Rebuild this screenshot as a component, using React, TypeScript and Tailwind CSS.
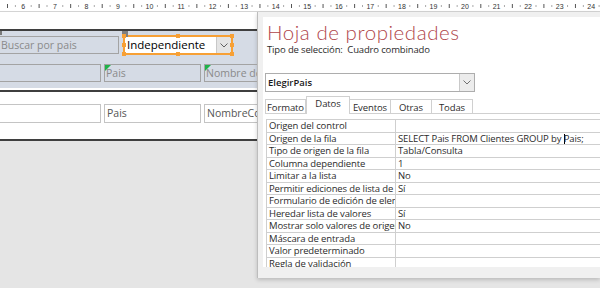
import React from "react";

const nums = Array.from({ length: 19 }, (_, i) => i + 6);

function Ruler() {
  const step = 31.55;
  const x0 = 23.3;
  return (
    <div className="h-[12px] bg-white border-b border-[#d4d4d4]">
      <svg width="600" height="11" className="block">
        <rect x={x0 - 15.8 - 0.5} y={4} width={1} height={4} fill="#555" />
        <rect x={x0 - 7.9 - 0.5} y={5.5} width={1} height={1} fill="#555" />
        {nums.map((n, i) => {
          const x = x0 + i * step;
          return (
            <g key={n}>
              <text x={x} y={8.5} fontSize="7" textAnchor="middle" fill="#333" fontFamily="Liberation Sans, sans-serif">
                {n}
              </text>
              <rect x={x + 7.9 - 0.5} y={5.5} width={1} height={1} fill="#555" />
              <rect x={x + 15.8 - 0.5} y={4} width={1} height={4} fill="#555" />
              <rect x={x + 23.7 - 0.5} y={5.5} width={1} height={1} fill="#555" />
            </g>
          );
        })}
      </svg>
    </div>
  );
}

function GreenTri() {
  return (
    <svg width="6" height="6" className="absolute left-0 top-0">
      <polygon points="0,0 6,0 0,6" fill="#1fb24a" />
    </svg>
  );
}

function Chevron({ color = "#606060" }: { color?: string }) {
  return (
    <svg width="8" height="5" viewBox="0 0 8 5">
      <polyline points="0.5,0.5 4,4 7.5,0.5" fill="none" stroke={color} strokeWidth="1" />
    </svg>
  );
}

function Handle({ cls }: { cls: string }) {
  return <div className={"absolute w-[4px] h-[4px] bg-[#f7a035] " + cls} />;
}

function DesignArea() {
  return (
    <div className="w-[257px] shrink-0 font-['Open_Sans',sans-serif]">
      <div className="h-[17px] bg-white" />
      <div className="h-[2px] bg-[#3f3f3f]" />
      {/* Header band */}
      <div className="h-[57px] bg-[#d5dbe5] overflow-hidden">
        <div className="flex items-start relative">
          <div className="absolute left-0 top-0 w-[2px] h-[4px] bg-[#7a7a7a]" />
          <div className="ml-[-2px] mt-[5px] w-[121px] h-[18px] border border-[#a3a3a3] text-[10.5px] leading-[16px] text-[#8a8a8a] pl-[2px] whitespace-nowrap">
            Buscar por pais
          </div>
          <div className="relative ml-[4px] mt-[4px]">
            <div className="absolute left-[-1px] top-[-4px] w-[6px] h-[6px] bg-[#7f7f7f]" />
            <div className="w-[110px] h-[20px] border-2 border-[#f7a035] flex">
              <div className="w-[91px] h-full bg-white text-[11.5px] leading-[16px] text-black pl-[2px] whitespace-nowrap">
                Independiente
              </div>
              <div className="w-[15px] h-full bg-[#e4e4e4] border-l border-[#c8c8c8] flex items-center justify-center">
                <Chevron />
              </div>
            </div>
            <Handle cls="left-[-1px] top-[-1px]" />
            <Handle cls="left-[53px] top-[-1px]" />
            <Handle cls="right-[-1px] top-[-1px]" />
            <Handle cls="left-[-1px] top-[8px]" />
            <Handle cls="right-[-1px] top-[8px]" />
            <Handle cls="left-[-1px] bottom-[-1px]" />
            <Handle cls="left-[53px] bottom-[-1px]" />
            <Handle cls="right-[-1px] bottom-[-1px]" />
          </div>
        </div>
        <div className="flex mt-[9px] gap-[3px] text-[10.5px] leading-[16px] text-[#8a8a8a]">
          <div className="ml-[-2px] w-[103px] h-[18px] border border-[#a3a3a3] shrink-0" />
          <div className="relative w-[97px] h-[18px] border border-[#a3a3a3] pl-[1px] shrink-0">
            <GreenTri />
            Pais
          </div>
          <div className="relative w-[80px] h-[18px] border border-[#a3a3a3] pl-[1px] shrink-0 whitespace-nowrap">
            <GreenTri />
            Nombre de contacto
          </div>
        </div>
      </div>
      <div className="h-[2px] bg-white" />
      <div className="h-[2px] bg-[#3f3f3f]" />
      {/* Detail */}
      <div className="h-[47px] bg-white overflow-hidden">
        <div className="flex mt-[12px] gap-[3px] text-[10.5px] leading-[17px] text-[#555]">
          <div className="ml-[-2px] w-[103px] h-[19px] border border-[#c4c4c4] shrink-0" />
          <div className="w-[97px] h-[19px] border border-[#c4c4c4] pl-[2px] shrink-0">Pais</div>
          <div className="w-[80px] h-[19px] border border-[#c4c4c4] pl-[2px] shrink-0 whitespace-nowrap">NombreContacto</div>
        </div>
      </div>
      <div className="h-[2px] bg-[#3f3f3f]" />
    </div>
  );
}

const rows: [string, React.ReactNode][] = [
  ["Origen del control", ""],
  [
    "Origen de la fila",
    <span>
      SELECT Pais FROM Clientes GROUP by <span className="inline-block w-px h-[10px] bg-black align-middle -mr-px" />Pais;
    </span>,
  ],
  ["Tipo de origen de la fila", "Tabla/Consulta"],
  ["Columna dependiente", "1"],
  ["Limitar a la lista", "No"],
  ["Permitir ediciones de lista de valores", "Sí"],
  ["Formulario de edición de elementos de lista", ""],
  ["Heredar lista de valores", "Sí"],
  ["Mostrar solo valores de origen de la fila", "No"],
  ["Máscara de entrada", ""],
  ["Valor predeterminado", ""],
  ["Regla de validación", ""],
  ["Texto de validación", ""],
];

const tabs = [
  { label: "Formato", w: "w-[41px]" },
  { label: "Datos", w: "w-[44px]", active: true },
  { label: "Eventos", w: "w-[41px]" },
  { label: "Otras", w: "w-[41px]" },
  { label: "Todas", w: "w-[41px]" },
];

function Panel() {
  return (
    <div className="flex-1 h-[266px] bg-[#f0f0f0] border-l border-[#bdbdbd] pl-[5px] pt-[5px] pb-[11px] shadow-[0_2px_4px_rgba(0,0,0,0.18)] font-['Open_Sans',sans-serif] text-[#2b2b2b]">
      <div className="h-full bg-white overflow-hidden">
        <div className="pl-[4px] pt-[4px] h-[27px] text-[20.5px] leading-[22px] tracking-[0.55px] font-light text-[#b0454a] font-['Lato',sans-serif] whitespace-nowrap">
          Hoja de propiedades
        </div>
        <div className="pl-[4px] h-[12px] text-[9.5px] leading-[12px] tracking-[-0.15px] whitespace-pre">Tipo de selección:  Cuadro combinado</div>
        <div className="ml-[2px] mt-[17px] w-[210px] h-[19px] border border-[#adadad] flex">
          <div className="flex-1 pl-[2px] text-[9.5px] leading-[17px] font-semibold text-[#1a1a1a]">ElegirPais</div>
          <div className="w-[15px] h-full bg-[#ececec] border-l border-[#c9c9c9] flex items-center justify-center">
            <Chevron color="#707070" />
          </div>
        </div>
        <div className="ml-[2px] mt-[5px] h-[17px] border-b border-[#d0d0d0] flex items-end text-[9.5px] tracking-[-0.1px]">
          {tabs.map((t) =>
            t.active ? (
              <div
                key={t.label}
                className={t.w + " h-[18px] -mb-px bg-white border border-b-0 border-[#d0d0d0] text-center leading-[14px]"}
              >
                {t.label}
              </div>
            ) : (
              <div
                key={t.label}
                className={t.w + " h-[14px] bg-white border-t border-r border-[#d0d0d0] first:border-l text-center leading-[15px]"}
              >
                {t.label}
              </div>
            )
          )}
        </div>
        <div className="ml-[3px] mt-[5px] border-t border-l border-[#cfcfcf] text-[9.5px] tracking-[-0.12px]">
          {rows.map(([k, v], i) => (
            <div key={i} className="flex h-[12.5px] border-b border-[#cfcfcf] leading-[11.5px]">
              <div className="w-[129px] shrink-0 border-r border-[#cfcfcf] pl-[2px] overflow-hidden whitespace-nowrap">{k}</div>
              <div className="flex-1 pl-[2px] whitespace-nowrap overflow-hidden">{v}</div>
            </div>
          ))}
        </div>
      </div>
    </div>
  );
}

export default function App() {
  return (
    <div className="w-[600px] h-[288px] overflow-hidden bg-[#e5e5e5]">
      <Ruler />
      <div className="flex">
        <DesignArea />
        <Panel />
      </div>
    </div>
  );
}
